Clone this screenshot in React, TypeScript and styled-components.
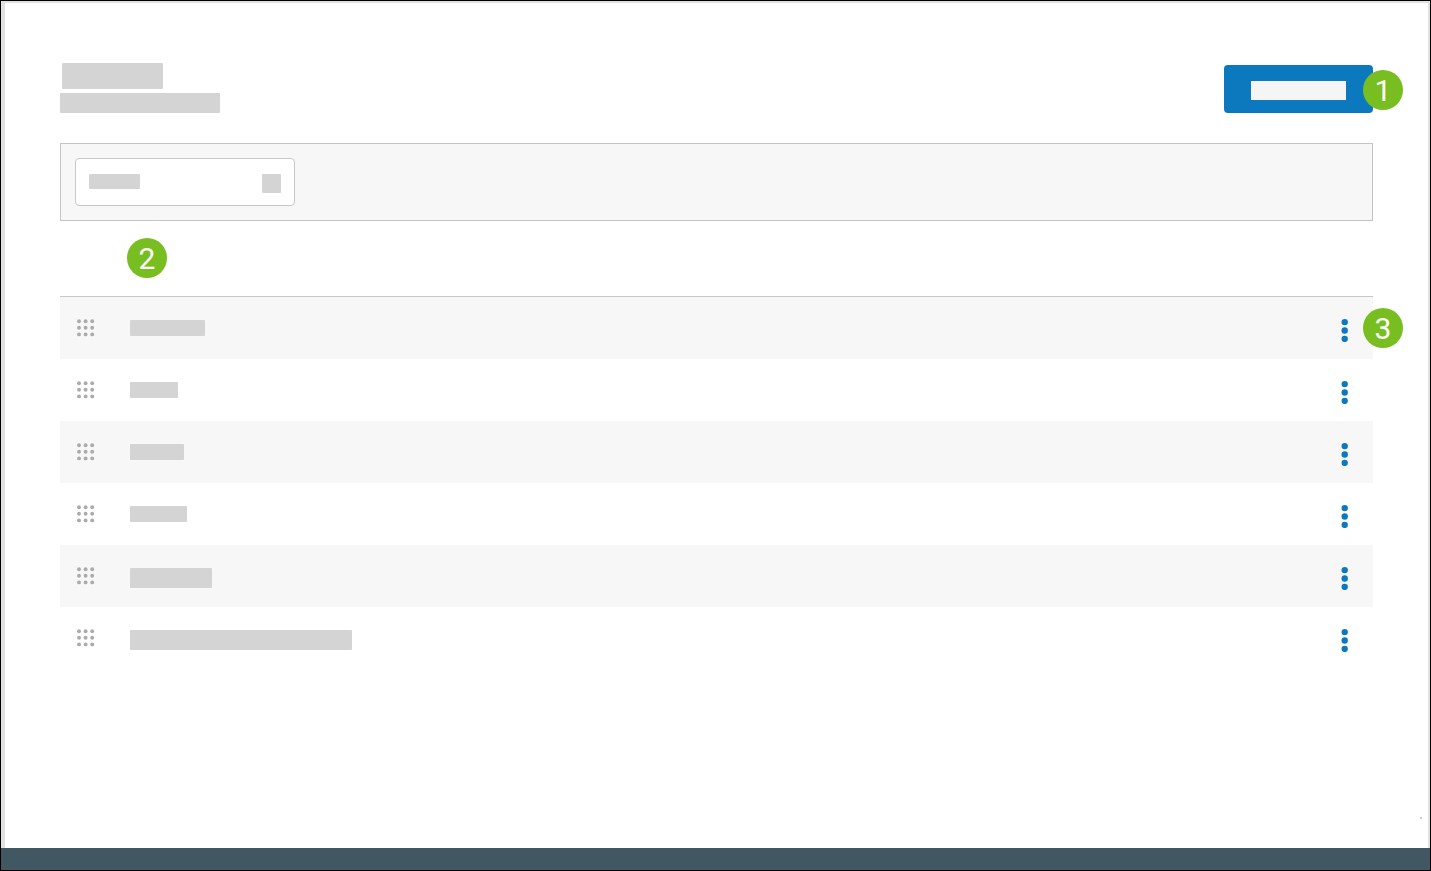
import React from "react";
import styled, { createGlobalStyle } from "styled-components";

const GlobalStyle = createGlobalStyle`
  *, *::before, *::after { box-sizing: border-box; }
  body {
    margin: 0;
    background: #ffffff;
    font-family: Roboto, Arial, sans-serif;
  }
`;

const Page = styled.div`
  display: flex;
  flex-direction: column;
  min-height: 100vh;
  border: 1px solid #000000;
`;

const Main = styled.main`
  position: relative;
  flex: 1;
  padding: 60px 55px 0;
  border: solid #e3e0e1;
  border-width: 2px 2px 0 4px;
`;

const Footer = styled.footer`
  height: 22px;
  background: #415863;
`;

const Header = styled.header`
  display: flex;
  justify-content: space-between;
  align-items: flex-end;
  margin-bottom: 30px;
`;

const Titles = styled.div`
  display: flex;
  flex-direction: column;
  gap: 4px;
`;

const Bar = styled.span<{ $width: number; $height: number; $indent?: number }>`
  display: block;
  flex: none;
  width: ${(p) => p.$width}px;
  height: ${(p) => p.$height}px;
  margin-left: ${(p) => p.$indent ?? 0}px;
  border-radius: 1px;
  background: #d4d4d4;
`;

const ActionWrap = styled.div`
  position: relative;
`;

const PrimaryButton = styled.button`
  display: block;
  height: 48px;
  padding: 16px 27px 13px;
  border: 0;
  border-radius: 4px;
  background: #0c79bf;
  cursor: pointer;
`;

const ButtonBar = styled(Bar)`
  border-radius: 0;
  background: #f5f5f5;
`;

const Badge = styled.span`
  display: block;
  width: 40px;
  height: 40px;
  border-radius: 50%;
  background: #78be20;
  color: #ffffff;
  font-size: 30px;
  line-height: 42px;
  text-align: center;
`;

const FloatingBadge = styled(Badge)<{ $top: number }>`
  position: absolute;
  top: ${(p) => p.$top}px;
  right: -30px;
`;

const Toolbar = styled.div`
  padding: 14px;
  border: 1px solid #c4c4c4;
  background: #f7f7f7;
`;

const Field = styled.label`
  position: relative;
  display: flex;
  justify-content: space-between;
  align-items: flex-start;
  width: 220px;
  height: 48px;
  padding: 16px 14px;
`;

const FieldInput = styled.input`
  position: absolute;
  inset: 0;
  width: 100%;
  height: 100%;
  padding: 0 40px 0 14px;
  border: 1px solid #c8c8c8;
  border-radius: 4px;
  background: #ffffff;
  font: inherit;
`;

const FieldBar = styled(Bar)`
  position: relative;
  pointer-events: none;
`;

const ListHeading = styled.div`
  height: 75px;
  padding: 17px 67px 0;
`;

const List = styled.ul`
  margin: 0;
  padding: 0;
  border-top: 1px solid #c8c8c8;
  list-style: none;
`;

const Row = styled.li`
  position: relative;
  display: flex;
  align-items: flex-start;
  height: 62px;
  padding: 0 20px 0 12px;

  &:nth-child(odd) {
    background: #f7f7f7;
  }
`;

const IconButton = styled.button<{ $width: number }>`
  display: flex;
  justify-content: center;
  align-items: center;
  width: ${(p) => p.$width}px;
  height: 62px;
  padding: 0;
  border: 0;
  background: transparent;
  cursor: pointer;
`;

const RowLabel = styled.div`
  flex: 1;
  padding: 23px 30px 0;
`;

const GridDots = () => (
  <svg width="18" height="20" viewBox="0 0 18 20" fill="#ababab" aria-hidden="true">
    {[3.2, 9.8, 16.4].map((y) =>
      [2, 8.6, 15.2].map((x) => <circle key={`${x}-${y}`} cx={x} cy={y} r="1.95" />)
    )}
  </svg>
);

const MoreDots = () => (
  <svg width="8" height="28" viewBox="0 0 8 28" fill="#0c79bf" aria-hidden="true">
    {[8.1, 16.5, 24.9].map((y) => (
      <circle key={y} cx="3.7" cy={y} r="3.2" />
    ))}
  </svg>
);

const Speck = styled.span`
  position: absolute;
  right: 6px;
  bottom: 29px;
  width: 2px;
  height: 2px;
  background: #cccccc;
`;

const rows = [
  { width: 75, height: 16 },
  { width: 48, height: 16 },
  { width: 54, height: 16 },
  { width: 57, height: 16 },
  { width: 82, height: 20 },
  { width: 222, height: 20 },
];

export default function App() {
  return (
    <Page>
      <GlobalStyle />
      <Main>
        <Header>
          <Titles>
            <Bar $width={101} $height={26} $indent={2} />
            <Bar $width={160} $height={20} />
          </Titles>
          <ActionWrap>
            <PrimaryButton type="button" aria-label="Add item">
              <ButtonBar $width={95} $height={19} />
            </PrimaryButton>
            <FloatingBadge $top={5}>1</FloatingBadge>
          </ActionWrap>
        </Header>
        <Toolbar>
          <Field>
            <FieldInput type="text" aria-label="Search" />
            <FieldBar $width={51} $height={15} />
            <FieldBar $width={19} $height={19} />
          </Field>
        </Toolbar>
        <ListHeading>
          <Badge>2</Badge>
        </ListHeading>
        <List>
          {rows.map((row, i) => (
            <Row key={i}>
              <IconButton type="button" $width={28} aria-label="Reorder">
                <GridDots />
              </IconButton>
              <RowLabel>
                <Bar $width={row.width} $height={row.height} />
              </RowLabel>
              <IconButton type="button" $width={17} aria-label="More actions">
                <MoreDots />
              </IconButton>
              {i === 0 && <FloatingBadge $top={11}>3</FloatingBadge>}
            </Row>
          ))}
        </List>
        <Speck />
      </Main>
      <Footer />
    </Page>
  );
}
